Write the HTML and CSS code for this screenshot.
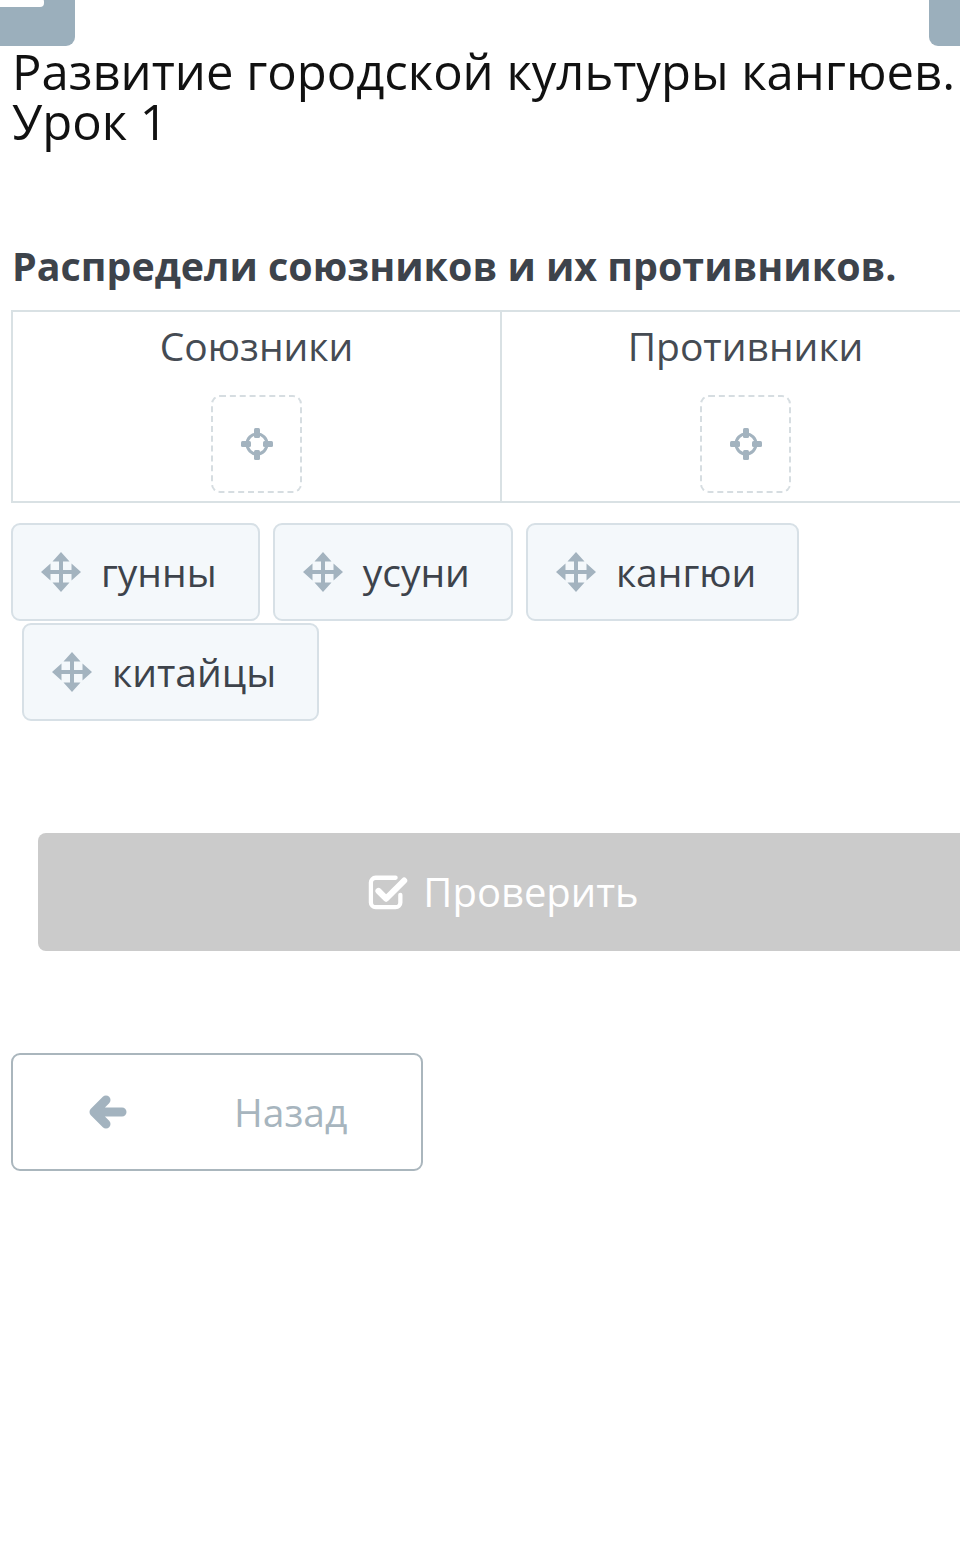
FILE: index.html
```html
<!DOCTYPE html>
<html lang="ru">
<head>
<meta charset="utf-8">
<title>Развитие городской культуры кангюев. Урок 1</title>
<link rel="stylesheet" href="styles.css">
</head>
<body>
<div class="page">
  <header class="topbar">
    <div class="corner-btn corner-left"><span class="burger-line"></span></div>
    <div class="corner-btn corner-right"></div>
  </header>

  <h1 class="title">Развитие городской культуры кангюев. Урок 1</h1>

  <h2 class="task">Распредели союзников и их противников.</h2>

  <div class="board">
    <div class="column">
      <div class="column-title">Союзники</div>
      <div class="dropzone">
        <svg class="target" viewBox="0 0 38 38" width="38" height="38">
          <circle cx="19" cy="19" r="10" fill="none" stroke="#a3b3bf" stroke-width="3"/>
          <rect x="16" y="3" width="6" height="10" rx="1.5" fill="#a3b3bf"/>
          <rect x="16" y="25" width="6" height="10" rx="1.5" fill="#a3b3bf"/>
          <rect x="3" y="16" width="10" height="6" rx="1.5" fill="#a3b3bf"/>
          <rect x="25" y="16" width="10" height="6" rx="1.5" fill="#a3b3bf"/>
        </svg>
      </div>
    </div>
    <div class="column">
      <div class="column-title">Противники</div>
      <div class="dropzone">
        <svg class="target" viewBox="0 0 38 38" width="38" height="38">
          <circle cx="19" cy="19" r="10" fill="none" stroke="#a3b3bf" stroke-width="3"/>
          <rect x="16" y="3" width="6" height="10" rx="1.5" fill="#a3b3bf"/>
          <rect x="16" y="25" width="6" height="10" rx="1.5" fill="#a3b3bf"/>
          <rect x="3" y="16" width="10" height="6" rx="1.5" fill="#a3b3bf"/>
          <rect x="25" y="16" width="10" height="6" rx="1.5" fill="#a3b3bf"/>
        </svg>
      </div>
    </div>
  </div>

  <div class="chips">
    <div class="chip-row">
      <div class="chip">
        <svg class="move" viewBox="0 0 40 40" width="40" height="40"><path d="M18 8h4v10h10v4H22v10h-4V22H8v-4h10z"/><path d="M20 0l8.5 9.5h-17zM20 40l-8.5-9.5h17zM0 20l9.5-8.5v17zM40 20l-9.5 8.5v-17z"/></svg>
        <span class="chip-text">гунны</span>
      </div>
      <div class="chip">
        <svg class="move" viewBox="0 0 40 40" width="40" height="40"><path d="M18 8h4v10h10v4H22v10h-4V22H8v-4h10z"/><path d="M20 0l8.5 9.5h-17zM20 40l-8.5-9.5h17zM0 20l9.5-8.5v17zM40 20l-9.5 8.5v-17z"/></svg>
        <span class="chip-text">усуни</span>
      </div>
      <div class="chip">
        <svg class="move" viewBox="0 0 40 40" width="40" height="40"><path d="M18 8h4v10h10v4H22v10h-4V22H8v-4h10z"/><path d="M20 0l8.5 9.5h-17zM20 40l-8.5-9.5h17zM0 20l9.5-8.5v17zM40 20l-9.5 8.5v-17z"/></svg>
        <span class="chip-text">кангюи</span>
      </div>
    </div>
    <div class="chip-row chip-row-second">
      <div class="chip">
        <svg class="move" viewBox="0 0 40 40" width="40" height="40"><path d="M18 8h4v10h10v4H22v10h-4V22H8v-4h10z"/><path d="M20 0l8.5 9.5h-17zM20 40l-8.5-9.5h17zM0 20l9.5-8.5v17zM40 20l-9.5 8.5v-17z"/></svg>
        <span class="chip-text">китайцы</span>
      </div>
    </div>
  </div>

  <div class="check-wrap">
    <div class="check-btn">
      <svg class="check-icon" viewBox="0 0 44 40" width="42" height="38">
        <path d="M30 5 H9 a5 5 0 0 0 -5 5 v21 a5 5 0 0 0 5 5 h21 a5 5 0 0 0 5 -5 v-8" fill="none" stroke="#ffffff" stroke-width="4.5" stroke-linecap="round"/>
        <path d="M12 19 L20 27 L39 8" fill="none" stroke="#ffffff" stroke-width="6.5" stroke-linecap="round" stroke-linejoin="round"/>
      </svg>
      <span class="check-text">Проверить</span>
    </div>
  </div>

  <div class="back-wrap">
    <div class="back-btn">
      <svg class="back-icon" viewBox="0 0 40 34" width="40" height="34">
        <path d="M19 5 L7 17 L19 29 M7 17 H35" fill="none" stroke="#a3b3bf" stroke-width="9" stroke-linecap="round" stroke-linejoin="round"/>
      </svg>
      <span class="back-text">Назад</span>
    </div>
  </div>
</div>
</body>
</html>
```

FILE: styles.css
```css
html, body {
  margin: 0;
  padding: 0;
  background: #ffffff;
  overflow: hidden;
}

body {
  font-family: "Open Sans", "Noto Sans", "Liberation Sans", sans-serif;
  color: #3d434b;
}

.page {
  width: 960px;
  height: 1564px;
  overflow: hidden;
}

.topbar {
  display: flex;
  justify-content: space-between;
  height: 46px;
}

.corner-btn {
  background: #9bafbc;
  height: 46px;
}

.corner-left {
  width: 75px;
  border-bottom-right-radius: 9px;
  position: relative;
}

.burger-line {
  position: absolute;
  left: 0;
  top: -2px;
  width: 44px;
  height: 9px;
  background: #ffffff;
  border-radius: 0 4px 4px 0;
}

.corner-right {
  width: 31px;
  border-bottom-left-radius: 9px;
}

.title {
  margin: 0;
  padding: 0 0 0 12px;
  font-weight: 400;
  font-size: 49px;
  line-height: 50px;
  color: #111111;
  width: 980px;
  box-sizing: border-box;
}

.task {
  margin: 96px 0 0 0;
  padding-left: 12px;
  font-weight: 700;
  font-size: 39.4px;
  line-height: 48px;
  color: #3d434b;
  white-space: nowrap;
}

.board {
  display: flex;
  margin: 20px 0 0 11px;
  width: 980px;
  border: 2px solid #d9e1e4;
  box-sizing: border-box;
  height: 193px;
}

.column {
  flex: 1;
  display: flex;
  flex-direction: column;
  align-items: center;
}

.column + .column {
  border-left: 2px solid #d9e1e4;
}

.column-title {
  font-size: 39px;
  line-height: 50px;
  margin-top: 9px;
  color: #454b53;
}

.dropzone {
  margin-top: 24px;
  width: 91px;
  height: 98px;
  box-sizing: border-box;
  border: 2px dashed #d6dde1;
  border-radius: 9px;
  display: flex;
  align-items: center;
  justify-content: center;
}

.chips {
  margin-top: 20px;
  display: flex;
  flex-direction: column;
  gap: 2px;
}

.chip-row {
  display: flex;
  gap: 13px;
  padding-left: 11px;
}

.chip-row-second {
  padding-left: 22px;
}

.chip {
  display: flex;
  align-items: center;
  height: 98px;
  box-sizing: border-box;
  padding: 0 41px 0 28px;
  background: #f4f8fb;
  border: 2px solid #d7e0e6;
  border-radius: 9px;
}

.move {
  fill: #a3b3bf;
  flex: none;
}

.chip-text {
  margin-left: 20px;
  font-size: 39px;
  line-height: 50px;
  color: #3d434b;
}

.check-wrap {
  margin-top: 112px;
  padding-left: 38px;
}

.check-btn {
  width: 930px;
  height: 118px;
  background: #cbcbcb;
  border-radius: 8px;
  display: flex;
  align-items: center;
  justify-content: center;
}

.check-icon {
  margin-right: 14px;
}

.check-text {
  font-size: 40px;
  line-height: 50px;
  color: #ffffff;
}

.back-wrap {
  margin-top: 102px;
  padding-left: 11px;
}

.back-btn {
  width: 412px;
  height: 118px;
  box-sizing: border-box;
  border: 2px solid #aab6bd;
  border-radius: 9px;
  display: flex;
  align-items: center;
  padding-left: 74px;
}

.back-icon {
  flex: none;
}

.back-text {
  margin-left: 107px;
  font-size: 39px;
  line-height: 50px;
  color: #a7b5be;
}
```
